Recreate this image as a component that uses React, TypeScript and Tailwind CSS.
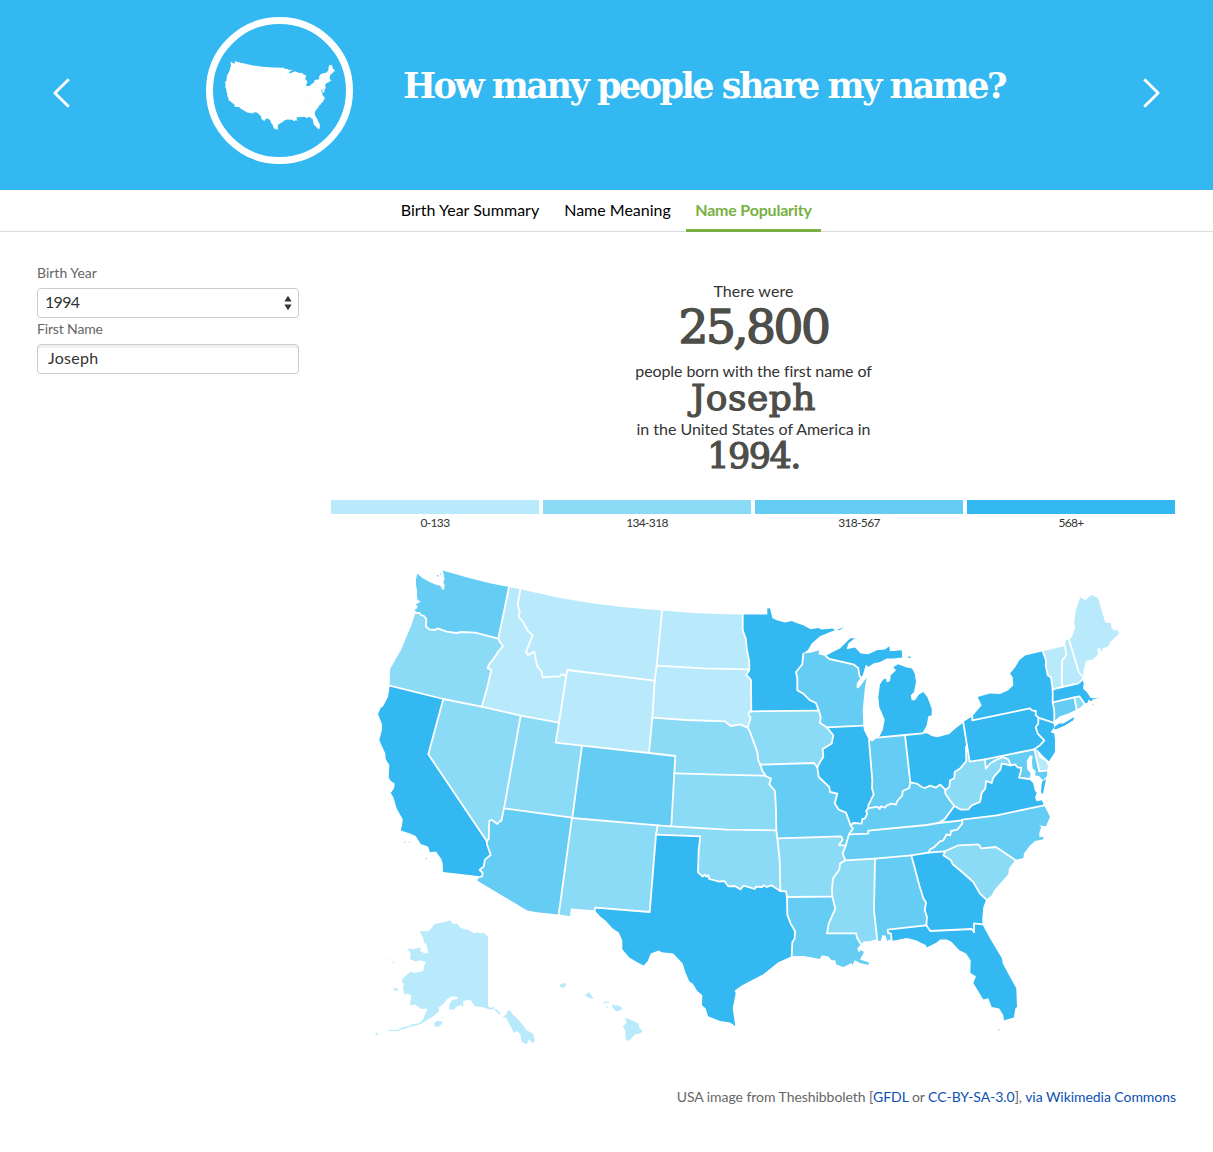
import React from "react";

type Section = "A" | "B" | "C" | "D" | "E" | "F" | "G" | "H";

// Origins of the map sections; arc points are stored in thirds of a pixel from them.
const origins: Record<Section, [number, number]> = {
  A: [370, 560],
  B: [370, 740],
  C: [560, 570],
  D: [560, 770],
  E: [740, 600],
  F: [760, 770],
  G: [900, 580],
  H: [900, 690],
};

const arcs: Record<string, [Section, string]> = {
  waCoast: ["A", "134,158 138,152 133,148 141,145 143,138 137,132 145,129 152,122 143,120 141,108 141,90 138,75 138,58 142,40 158,54 180,66 200,74 210,76 216,86 222,89 224,74 220,66 224,56 221,48 222,42 217,31 250,40 300,54 360,69 417,80"],
  waOr: ["A", "134,158 148,158 153,164 162,167 169,176 168,198 178,207 196,209 203,204 230,214 258,218 276,215 316,217 385,235"],
  waId: ["A", "417,80 385,235"],
  orId: ["A", "385,235 390,246 399,257 384,275 372,293 356,314 353,324 364,329 350,388 335,439"],
  orCoast: ["A", "134,158 134,164 122,200 110,227 96,263 80,292 60,327 59,376"],
  orCa: ["A", "59,376 220,416"],
  orNv: ["A", "220,416 335,439"],
  idNv: ["A", "335,439 452,466"],
  idUt: ["A", "452,466 567,487"],
  idTop: ["A", "417,80 451,87"],
  idMt: ["A", "451,87 443,135 449,155 446,170 459,184 473,211 488,225 478,250 468,275 474,284 493,274 498,300 502,318 514,333 518,351 545,349 568,349 574,342 582,343 588,352"],
  idWy: ["A", "588,352 567,487"],
  mtTop: ["C", "-119,57 0,83 100,100 200,112 306,121"],
  mtNd: ["C", "306,121 290,286"],
  mtSd: ["C", "290,286 284,331"],
  mtWy: ["C", "284,331 22,299 18,323"],
  utWy: ["C", "-3,457 -13,517 66,526"],
  wySd: ["C", "284,331 277,442"],
  wyNe: ["C", "277,442 267,548"],
  wyCo: ["C", "267,548 66,526"],
  neCo: ["C", "267,548 346,557 343,609"],
  ndTop: ["C", "306,121 400,128 470,131 548,133"],
  ndSd: ["C", "290,286 430,294 568,297"],
  ndMn: ["C", "548,133 548,180 557,205 561,240 568,275 568,297"],
  sdMn: ["C", "568,297 566,303 559,313 573,329 574,423"],
  sdIa: ["C", "574,423 566,426 566,434 572,442 566,462 563,472"],
  sdNe: ["C", "277,442 380,449 494,453 512,467 540,462 563,472"],
  neIa: ["C", "563,472 570,485 583,520 592,545 595,570 601,583"],
  neMo: ["C", "601,583 606,600 617,616"],
  neKs: ["C", "343,609 480,613 617,616"],
  ksMo: ["D", "616,17 633,25 628,42 645,62 648,120 649,180"],
  coKs: ["D", "343,9 334,168"],
  okKs: ["D", "334,168 500,178 649,180"],
  coOk: ["D", "334,168 293,165"],
  coNm: ["D", "293,165 37,143"],
  coUt: ["D", "66,-74 37,143"],
  utAz: ["B", "606,232 402,204"],
  utNv: ["B", "452,-74 402,204"],
  nvAz: ["B", "402,204 394,242 390,242 382,251 370,242 365,239 358,241 356,296 350,302"],
  nvCa: ["B", "220,-124 175,42 350,302"],
  caAz: ["B", "350,302 351,312 362,344 345,358 341,378 329,389 338,398 336,408 330,410"],
  caCoast: ["B", "59,-164 57,-148 54,-130 40,-103 32,-97 24,-79 36,-48 36,-32 28,0 46,40 47,57 58,74 56,112 62,122 74,130 72,145 62,158 70,170 80,205 98,237 96,256 92,271 118,279 137,287 152,311 174,319 180,336 198,334 214,356 218,370 219,395 330,408"],
  azSouth: ["B", "330,408 321,421 472,511 500,516 566,523"],
  azNm: ["B", "606,232 566,523"],
  nmSouth: ["B", "566,523 600,528 603,505 674,510"],
  nmTx: ["D", "104,420 106,412 269,425 288,193"],
  nmOk: ["D", "288,193 293,165"],
  txOk: ["D", "288,193 421,198 416,240 414,306 428,319 434,313 438,319 445,315 448,326 478,334 493,332 505,348 524,347 541,357 551,346 584,356 588,349 606,350 612,345 620,350 634,345 661,362"],
  okMo: ["D", "649,180 652,203"],
  okAr: ["D", "652,203 659,270 661,362"],
  txAr: ["D", "661,362 678,363 681,380"],
  txLa: ["D", "681,380 682,433 692,460 705,483 704,505 697,516 695,558"],
  txCoast: ["D", "104,420 122,440 136,450 158,475 176,487 187,510 187,537 208,562 232,576 251,586 263,572 272,550 296,541 305,546 340,550 368,580 376,605 388,634 398,640 412,662 427,675 426,705 437,715 444,738 480,752 510,757 526,767 518,715 527,670 524,661 545,646 610,612 655,576 695,558"],
  moAr: ["F", "52,204 243,198 248,208 237,224 257,226"],
  moTn: ["F", "257,226 267,192"],
  moKy: ["F", "267,192 279,175 272,166"],
  arTn: ["F", "257,226 248,250 256,270"],
  arMs: ["F", "256,270 240,280 238,298 219,325 216,355 217,379"],
  arLa: ["F", "80,380 217,379"],
  msLa: ["F", "217,379 226,415 206,460 201,489 289,489 290,500 303,522"],
  laCoast: ["F", "95,558 132,557 180,566 185,556 204,558 215,570 226,570 228,582 250,590 275,578 278,585 284,570 295,575 300,578 325,584 327,577 300,568 312,545 303,540 296,546 292,535 303,522"],
  msCoast: ["F", "303,522 312,513 330,513 345,508 352,511"],
  msAl: ["F", "345,265 342,420 352,511"],
  tnMs: ["F", "256,270 345,265"],
  tnAl: ["F", "345,265 454,255"],
  tnGa: ["F", "454,255 505,247"],
  gaNc: ["F", "505,247 555,243"],
  tnNc: ["F", "505,247 510,238 523,230 540,213 550,210 560,192 571,195 573,182 592,178 607,160 606,150"],
  alGa: ["F", "454,255 478,345 490,384 498,397 494,420 501,440 499,465"],
  alFl: ["F", "499,465 383,478 384,488 393,490 395,512"],
  alCoast: ["F", "352,511 362,512 367,495 376,496 382,512 388,508 395,512"],
  flCoast: ["F", "395,512 440,503 468,510 498,525 500,532 530,517 540,508 560,508 575,515 598,540 618,550 632,570 631,608 648,618 640,638 670,688 685,684 695,710 718,715 730,735 732,750 762,742 766,715 771,710 769,655 728,580 726,565 690,505 667,462"],
  gaFl: ["F", "499,465 511,482 635,476 642,486 642,459 667,462"],
  gaCoast: ["F", "667,462 667,445 670,410 679,388"],
  gaSc: ["F", "555,243 550,255 573,270 578,282 600,300 640,335 660,370 679,388"],
  scCoast: ["F", "679,388 695,375 703,359 745,312 747,295 766,269"],
  ncSc: ["F", "555,243 595,225 655,222 664,234 708,230 766,269"],
  ncCoast: ["H", "345,509 370,503 372,490 388,468 405,452 428,448 432,440 418,440 418,428 424,410 416,405 438,408 450,380 440,360 432,345"],
  ncVa: ["H", "432,345 290,375 187,388"],
  tnKy: ["F", "267,192 325,190 325,181 500,164 535,158"],
  tnVa: ["F", "535,158 606,150"],
  kyVa: ["F", "535,158 553,148 583,107"],
  kyWv: ["F", "583,107 568,88 556,70 556,58"],
  kyOh: ["F", "556,58 541,43 528,52 510,46 495,53 485,50 470,40 451,36"],
  kyIn: ["F", "451,36 448,53 428,62 427,75 412,92 408,103 395,100 380,105 376,112 362,108 359,116 352,109 325,114"],
  kyIl: ["F", "325,114 318,122 322,130 314,145 307,146 305,160 280,158 272,166"],
  ilMo: ["F", "172,-9 176,20 208,50 210,65 232,70 224,100 236,118 258,127 272,166"],
  ilIn: ["F", "327,-90 337,30 336,55 341,72 325,105 325,114"],
  inOh: ["E", "495,404 511,546"],
  inMi: ["E", "412,412 495,404"],
  inCoast: ["E", "387,420 398,423 412,412"],
  ohMi: ["E", "495,404 548,399"],
  ohCoast: ["H", "68,129 82,130 95,137 112,141 148,131 168,113 190,97"],
  ohPa: ["H", "190,97 201,165"],
  ohWv: ["H", "201,165 198,170 199,212 180,235 164,245 163,264 150,270 148,290 135,300"],
  paWv: ["H", "201,165 209,214 255,207"],
  paMd: ["H", "255,207 403,177"],
  paCoast: ["H", "190,95 217,78"],
  paNy: ["H", "217,78 217,90 390,54 396,60 407,62 407,74 415,82"],
  paNj: ["H", "415,82 415,100 407,110 413,130 433,150 420,165 403,177"],
  nyNj: ["H", "415,82 460,97"],
  njCoast: ["H", "460,97 463,110 452,126 463,130 465,150 465,185 447,213 430,198 412,178"],
  nyCoast: ["G", "217,408 245,375 233,350 270,340 300,341 325,330 340,315 338,290 330,280 345,262 358,240 375,226 400,220 428,213"],
  nyVt: ["G", "428,213 438,240 437,255 443,285 453,292 458,327"],
  nyMa: ["G", "458,327 458,366"],
  nyCt: ["G", "458,366 463,392 463,425"],
  vtTop: ["G", "428,213 495,197"],
  vtNh: ["G", "495,197 499,225 487,240 485,300 487,320"],
  vtMa: ["G", "458,327 487,320"],
  nhMa: ["G", "487,320 535,309 548,297"],
  nhTop: ["G", "495,197 497,180 507,178"],
  nhMe: ["G", "507,178 536,275 549,290"],
  meCoast: ["G", "507,178 515,172 525,145 523,125 527,90 541,50 555,60 575,44 594,53 616,127 632,128 635,145 645,152 650,146 658,160 630,185 625,198 608,205 605,215 598,200 592,208 595,222 578,238 558,242 552,265 549,290"],
  maCoast: ["G", "548,297 551,312 549,325 560,335 572,353 590,355 597,348 592,355 578,358 574,364 566,358 562,368 553,369"],
  maCt: ["G", "458,366 523,351"],
  maRi: ["G", "523,351 538,348 553,369"],
  ctRi: ["G", "523,351 530,388"],
  ctCoast: ["G", "463,422 480,408 505,400 530,388"],
  riCoast: ["G", "553,369 543,380 530,388"],
  mdWv: ["H", "255,207 257,235 272,218 290,208 308,200 325,207 332,225"],
  mdVa: ["H", "332,225 345,222 354,232 364,232 362,245 357,262 388,266"],
  mdDe: ["H", "403,177 418,243 442,241"],
  deCoast: ["H", "403,177 412,178 417,200 438,214 444,228 442,241"],
  mdCoast: ["H", "442,241 441,258 428,270 418,258 405,255 407,242 398,235 396,215 398,197 390,195 380,212 382,238 392,250 388,266"],
  vaWv: ["H", "332,225 305,220 301,238 290,250 280,262 275,278 258,272 256,295 245,308 240,335 215,345 205,357 183,358 163,347"],
  vaCoast: ["H", "388,266 400,280 404,300 410,308 405,322 410,333 425,330 432,345"],
  mnCoast: ["E", "8,43 82,43 82,24 90,25 97,53 110,60 135,67 155,62 170,68 190,75 212,87 235,83 245,88 278,85 285,90 270,95 240,108 215,130 205,148 190,160"],
  mnWi: ["E", "190,160 187,192 168,215 172,235 172,270 190,280 210,300 228,308 236,331"],
  mnIa: ["E", "34,333 236,331"],
  wiIa: ["E", "236,331 242,350 240,368 260,381"],
  ilIa: ["E", "260,381 280,405 275,430 248,446 250,470 240,485 232,501"],
  moIa: ["E", "61,493 222,488 232,501"],
  wiIl: ["E", "260,381 370,376"],
  wiCoastN: ["E", "190,160 215,157 238,150 235,162 257,167"],
  wiMi: ["E", "257,167 268,176 340,192 355,203 358,225 362,232"],
  wiCoastE: ["E", "362,232 350,250 350,265 358,262 380,232 375,260 372,290 368,330 370,376"],
  ilCoast: ["E", "370,376 372,390 387,420"],
  upCoast: ["E", "257,167 275,157 300,145 330,115 345,113 325,130 320,147 345,142 362,160 385,162 410,150 435,148 448,138 450,153 485,150 487,172 460,175 440,175 420,185 400,190 385,200 378,193 368,225 362,232"],
  miCoast: ["E", "418,409 428,390 434,358 418,320 415,290 420,252 430,238 438,235 440,246 450,243 452,225 468,210 460,200 475,192 500,202 516,205 524,220 528,245 522,275 512,285 515,300 525,300 537,283 550,275 562,290 575,325 575,345 565,348 560,375 548,397"],
};

const tones = ["#b9eafb", "#8cdbf6", "#65ccf3", "#33b8f1"];

const states: [number, string][] = [
  [2, "waCoast waId -waOr"],
  [1, "waOr orId -orNv -orCa -orCoast"],
  [3, "orCa nvCa caAz -caCoast"],
  [1, "orNv idNv utNv nvAz -nvCa"],
  [0, "idTop idMt idWy -idUt -idNv -orId -waId"],
  [0, "mtTop mtNd mtSd mtWy -idMt"],
  [0, "-mtWy wySd wyNe wyCo -utWy -idWy"],
  [1, "idUt utWy coUt utAz -utNv"],
  [2, "-wyCo neCo coKs coOk coNm -coUt"],
  [2, "-utAz azNm -azSouth -caAz -nvAz"],
  [1, "-coNm -nmOk -nmTx -nmSouth -azNm"],
  [3, "txOk txAr txLa -txCoast nmTx"],
  [1, "-coOk okKs okMo okAr -txOk nmOk"],
  [1, "neKs ksMo -okKs -coKs"],
  [1, "sdNe neIa neMo -neKs -neCo -wyNe"],
  [0, "ndSd sdMn sdIa -sdNe -wySd -mtSd"],
  [0, "ndTop ndMn -ndSd -mtNd"],
  [3, "mnCoast mnWi -mnIa -sdMn -ndMn"],
  [1, "mnIa wiIa ilIa -moIa -neIa -sdIa"],
  [2, "moIa ilMo -moKy -moTn -moAr -okMo -ksMo -neMo"],
  [1, "moAr arTn arMs -arLa -txAr -okAr"],
  [2, "arLa msLa -laCoast -txLa"],
  [1, "tnMs msAl -msCoast -msLa -arMs"],
  [2, "tnAl alGa alFl -alCoast -msAl"],
  [3, "tnGa gaNc gaSc -gaCoast -gaFl -alGa"],
  [3, "gaFl -flCoast -alFl"],
  [1, "ncSc -scCoast -gaSc"],
  [2, "-ncVa -ncCoast -ncSc -gaNc tnNc"],
  [2, "tnKy tnVa -tnNc -tnGa -tnAl -tnMs -arTn moTn"],
  [2, "-kyIl -kyIn -kyOh -kyWv -kyVa -tnKy moKy"],
  [3, "wiIl ilCoast ilIn kyIl -ilMo -ilIa"],
  [2, "inCoast inMi inOh kyIn -ilIn"],
  [3, "ohMi ohCoast ohPa ohWv kyOh -inOh"],
  [2, "wiCoastN wiMi wiCoastE -wiIl -wiIa -mnWi"],
  [3, "upCoast -wiMi"],
  [3, "miCoast -ohMi -inMi"],
  [3, "paCoast paNy paNj -paMd -paWv -ohPa"],
  [1, "-ohWv paWv mdWv vaWv kyWv"],
  [2, "paMd mdDe mdCoast -mdVa -mdWv"],
  [3, "mdVa vaCoast ncVa -tnVa kyVa -vaWv"],
  [0, "deCoast -mdDe"],
  [3, "nyNj njCoast -paNj"],
  [3, "nyCoast nyVt nyMa nyCt -nyNj -paNy"],
  [0, "vtTop vtNh -vtMa -nyVt"],
  [0, "nhTop nhMe -nhMa -vtNh"],
  [0, "meCoast -nhMe"],
  [3, "vtMa nhMa maCoast -maRi -maCt -nyMa"],
  [2, "maCt ctRi -ctCoast -nyCt"],
  [1, "maRi riCoast -ctRi"],
];

// Islands and other detached land.
const islands: [number, Section, string][] = [
  [3, "G", "461,447 466,438 478,430 490,430 523,410 520,420 492,437 470,446"],
  [3, "H", "425,282 428,272 438,267 434,285 428,312 423,305"],
  [3, "E", "503,170 509,168 512,173 506,173"],
  [3, "E", "291,88 300,86 312,79 304,87 296,90"],
  [3, "G", "576,374 579,371 580,375"],
  [3, "B", "102,306 105,304 107,307"],
  [3, "B", "116,307 119,305 120,308"],
  [3, "B", "166,353 170,354 169,358"],
  [3, "F", "713,780 720,777 717,781"],
  [2, "A", "199,45 205,44 206,50"],
  [2, "A", "210,38 214,42 211,44"],
  [0, "B", "240,540 250,552 262,550 272,563 298,570 312,580 320,576 335,580 340,577 354,588 354,798 362,803 371,799 373,805 360,808 335,800 315,798 300,778 280,782 280,802 275,795 262,797 252,808 236,808 240,790 246,780 262,776 264,770 245,768 230,778 222,790 206,802 208,812 190,828 150,852 115,862 80,872 52,873 52,870 80,869 100,860 118,858 125,852 145,850 158,840 172,805 155,806 145,800 136,793 120,795 124,765 110,760 104,765 98,740 104,732 96,727 98,715 122,694 132,698 160,692 163,675 168,665 150,660 138,664 120,657 122,640 113,625 130,627 152,621 150,632 165,640 175,638 170,614 162,607 160,593 149,573 175,573 188,560 192,552 215,547 230,544"],
  [0, "B", "371,806 381,808 394,822 384,820"],
  [0, "B", "397,830 410,822 412,812 420,810 428,823 438,830 465,862 466,868 488,880 495,900 490,910 476,897 470,913 455,905 450,880 440,872 432,878 415,845 408,832"],
  [0, "B", "192,850 200,842 214,842 218,849 205,860 194,858"],
  [0, "B", "214,832 222,831 216,835"],
  [0, "B", "69,745 77,743 85,748 78,753"],
  [0, "B", "57,653 62,655 60,658"],
  [0, "B", "66,659 73,665 75,671 70,667"],
  [0, "B", "15,882 19,877 25,880 19,885"],
  [0, "B", "569,735 575,729 588,730 587,738 580,743 571,740"],
  [0, "B", "546,743 548,741 548,745"],
  [0, "D", "74,674 88,665 92,672 101,686 86,683"],
  [0, "D", "126,696 135,694 147,695 147,698 136,698"],
  [0, "D", "137,709 145,710 141,715"],
  [0, "D", "155,701 165,706 175,706 189,714 180,721 168,723 160,714"],
  [0, "D", "195,742 215,750 235,760 238,772 248,783 240,790 225,793 207,812 197,808 196,780 188,768 200,758"],
];

const toPoints = ([section, data]: [Section, string]): string[] => {
  const [ox, oy] = origins[section];
  return data.split(" ").map((pair) => {
    const [x, y] = pair.split(",").map(Number);
    return `${(ox + x / 3).toFixed(1)},${(oy + y / 3).toFixed(1)}`;
  });
};

const statePath = (refs: string) =>
  "M" +
  refs
    .split(" ")
    .flatMap((ref) => (ref[0] === "-" ? toPoints(arcs[ref.slice(1)]).reverse() : toPoints(arcs[ref])))
    .join("L") +
  "Z";

const arcUses = states.flatMap(([, refs]) => refs.split(" ").map((r) => r.replace("-", "")));
const borders = Object.keys(arcs).filter((name) => arcUses.filter((n) => n === name).length > 1);

const UsaMap = () => (
  <svg className="mt-[29px] block h-[500px] w-full" viewBox="331 559.7 844 500">
    {states.map(([tone, refs]) => (
      <path key={refs} d={statePath(refs)} fill={tones[tone]} />
    ))}
    {islands.map(([tone, section, data]) => (
      <path key={section + data} d={"M" + toPoints([section, data]).join("L") + "Z"} fill={tones[tone]} />
    ))}
    {borders.map((name) => (
      <path
        key={name}
        d={"M" + toPoints(arcs[name]).join("L")}
        fill="none"
        stroke="#fff"
        strokeWidth="1.8"
        strokeLinejoin="round"
        strokeLinecap="round"
      />
    ))}
  </svg>
);

const UsaIcon = () => (
  <svg className="h-[70px] w-[112px]" viewBox="0 0 112 70">
    <g transform="translate(1 1) scale(.1485 .1515) translate(-378 -570)" fill="#fff">
      {states.map(([, refs]) => (
        <path key={refs} d={statePath(refs)} />
      ))}
      {borders.map((name) => (
        <path key={name} d={"M" + toPoints(arcs[name]).join("L")} fill="none" stroke="#fff" strokeWidth="7" />
      ))}
      <path d="M800 655L850 640L900 655L925 665L915 700L925 740L860 745Z" />
    </g>
  </svg>
);

const Chevron = ({ flip = false }: { flip?: boolean }) => (
  <svg
    className={flip ? "h-[30px] w-[18px] -scale-x-100" : "h-[30px] w-[18px]"}
    viewBox="0 0 18 30"
    fill="none"
    stroke="#fff"
    strokeWidth="2.8"
    strokeLinejoin="round"
  >
    <path d="M15.8 1.2L1.9 15L15.8 28.8" />
  </svg>
);

const legend = [
  { label: "0-133", color: "bg-[#b9eafb]" },
  { label: "134-318", color: "bg-[#8cdbf6]" },
  { label: "318-567", color: "bg-[#65ccf3]" },
  { label: "568+", color: "bg-[#33b8f1]" },
];

export default function App() {
  return (
    <div className="h-[1152px] w-[1213px] overflow-hidden bg-white font-['Lato',sans-serif] text-[#333]">
      <header className="flex h-[190px] bg-[#33b8f1]">
        <button className="ml-[53px] mt-[78px] h-[30px] w-[18px]" aria-label="Previous">
          <Chevron />
        </button>
        <div className="ml-[135px] mt-[17px] flex h-[147px] w-[147px] justify-center rounded-full border-[7px] border-white pt-[36px]">
          <UsaIcon />
        </div>
        <h1 className="ml-[50px] mt-[62px] w-[739px] whitespace-nowrap font-['DejaVu_Serif',serif] text-[35px] font-bold leading-[48px] tracking-[-2.5px] text-white">
          How many people share my name?
        </h1>
        <button className="mt-[78px] h-[30px] w-[18px]" aria-label="Next">
          <Chevron flip />
        </button>
      </header>

      <nav className="flex h-[42px] justify-center gap-[5px] border-b border-[#dcdcdc] pr-px text-[16px] leading-[39px] text-black">
        <a className="w-[158px] whitespace-nowrap text-center tracking-[0.03px]">Birth Year Summary</a>
        <a className="w-[127px] whitespace-nowrap text-center">Name Meaning</a>
        <a className="h-[42px] w-[135px] whitespace-nowrap border-b-[3px] border-[#78b13f] text-center font-bold tracking-[-0.2px] text-[#78b13f]">
          Name Popularity
        </a>
      </nav>

      <main className="flex">
        <form className="ml-[37px] mt-[32px] w-[262px]">
          <label className="block h-[24px] text-[14px] leading-[17px] text-[#666]">Birth Year</label>
          <div className="flex h-[30px] items-center justify-between rounded-[4px] border border-[#ccc] pl-[7px] pr-[6px] text-[16px]">
            <span className="pb-[2px] tracking-[-0.7px]">1994</span>
            <svg className="h-[16px] w-[8px]" viewBox="0 0 8 16" fill="#333">
              <path d="M4 .8L7.6 6.5H.4ZM4 15.2L7.6 9.5H.4Z" />
            </svg>
          </div>
          <label className="mt-[2px] block h-[24px] text-[14px] leading-[17px] tracking-[-0.15px] text-[#666]">
            First Name
          </label>
          <div className="flex h-[30px] items-center rounded-[4px] border border-[#ccc] pb-[2px] pl-[10px] text-[16px] tracking-[0.25px] shadow-[inset_0_3px_1px_#f0f0f0]">
            Joseph
          </div>
        </form>

        <section className="ml-[32px] w-[845px] pt-[50px]">
          <div className="text-center text-[16px]">
            <p className="h-[20px] leading-[18px] tracking-[0.1px]">There were</p>
            <p className="h-[50px] font-['DejaVu_Serif',serif] text-[47px] leading-[50px] tracking-[-2.4px] text-[#4d4d49] [-webkit-text-stroke:1.5px_#4d4d49]">
              25,800
            </p>
            <p className="mt-[10px] h-[20px] leading-[18px] tracking-[-0.1px]">people born with the first name of</p>
            <p className="h-[38px] font-['DejaVu_Serif',serif] text-[36px] leading-[32px] tracking-[0.5px] text-[#4d4d49] [-webkit-text-stroke:1.2px_#4d4d49]">
              Joseph
            </p>
            <p className="h-[20px] leading-[18px] tracking-[-0.03px]">in the United States of America in</p>
            <p className="h-[38px] font-['DejaVu_Serif',serif] text-[35px] leading-[32px] tracking-[-1.5px] text-[#4d4d49] [-webkit-text-stroke:1.2px_#4d4d49]">
              1994.
            </p>
          </div>
          <div className="mt-[22px] grid w-[844px] grid-cols-4 gap-[4px]">
            {legend.map(({ label, color }) => (
              <div key={label} className="text-center text-[12px] leading-[17px] tracking-[-0.9px]">
                <div className={`h-[14px] ${color}`} />
                <span className="tracking-[-0.7px]">{label}</span>
              </div>
            ))}
          </div>
          <div className="w-[844px]">
            <UsaMap />
          </div>
          <p className="mt-[28px] whitespace-nowrap text-right text-[14px] leading-[18px] tracking-[-0.05px] text-[#666]">
            USA image from Theshibboleth [<a className="text-[#0a50b4]">GFDL</a> or{" "}
            <a className="text-[#0a50b4]">CC-BY-SA-3.0</a>], <a className="text-[#0a50b4]">via Wikimedia Commons</a>
          </p>
        </section>
      </main>
    </div>
  );
}
